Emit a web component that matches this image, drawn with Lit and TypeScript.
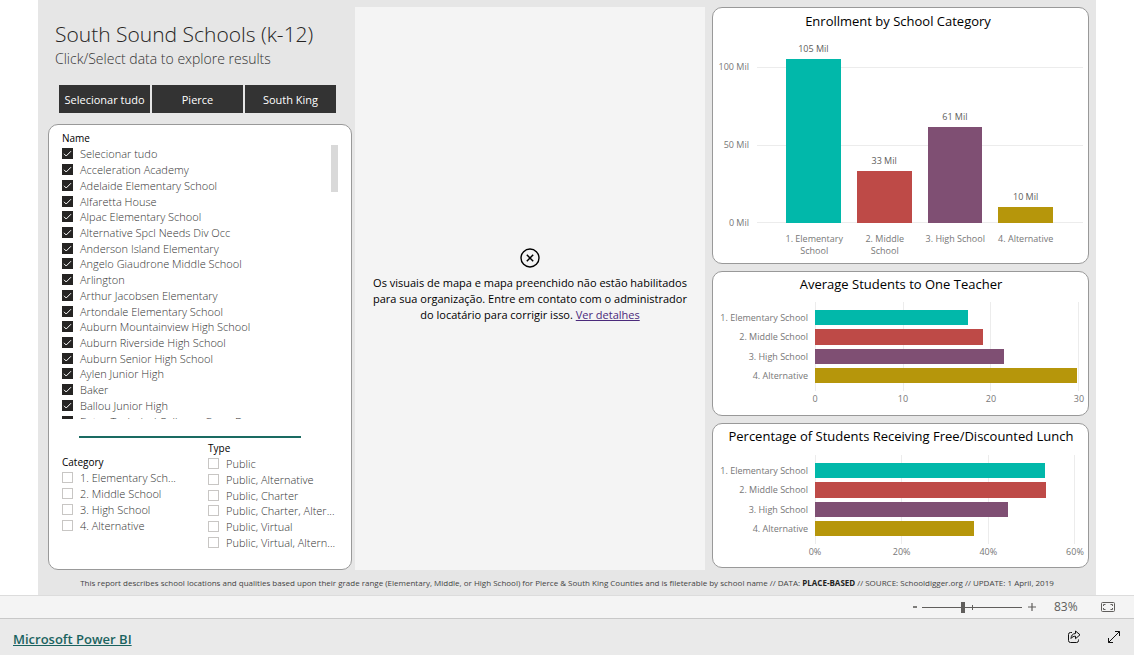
import { LitElement, html, css, svg } from "lit";
import { customElement } from "lit/decorators.js";
import { styleMap } from "lit/directives/style-map.js";

interface Bar {
  lines: string[];
  value: number;
  label?: string;
  color: string;
}

const TEAL = "#01b8aa";
const RED = "#be4a47";
const PURPLE = "#7f4f73";
const GOLD = "#b6960b";

const SCHOOLS = [
  "Selecionar tudo",
  "Acceleration Academy",
  "Adelaide Elementary School",
  "Alfaretta House",
  "Alpac Elementary School",
  "Alternative Spcl Needs Div Occ",
  "Anderson Island Elementary",
  "Angelo Giaudrone Middle School",
  "Arlington",
  "Arthur Jacobsen Elementary",
  "Artondale Elementary School",
  "Auburn Mountainview High School",
  "Auburn Riverside High School",
  "Auburn Senior High School",
  "Aylen Junior High",
  "Baker",
  "Ballou Junior High",
  "Bates Technical College - Open Doors",
];

const CATEGORIES = ["1. Elementary Sch...", "2. Middle School", "3. High School", "4. Alternative"];

const TYPES = [
  "Public",
  "Public, Alternative",
  "Public, Charter",
  "Public, Charter, Alter...",
  "Public, Virtual",
  "Public, Virtual, Altern...",
];

const ENROLLMENT: Bar[] = [
  { lines: ["1. Elementary", "School"], value: 105, label: "105 Mil", color: TEAL },
  { lines: ["2. Middle", "School"], value: 33.4, label: "33 Mil", color: RED },
  { lines: ["3. High School"], value: 61.6, label: "61 Mil", color: PURPLE },
  { lines: ["4. Alternative"], value: 10, label: "10 Mil", color: GOLD },
];

const RATIO: Bar[] = [
  { lines: ["1. Elementary School"], value: 17.4, color: TEAL },
  { lines: ["2. Middle School"], value: 19.1, color: RED },
  { lines: ["3. High School"], value: 21.5, color: PURPLE },
  { lines: ["4. Alternative"], value: 29.8, color: GOLD },
];

const LUNCH: Bar[] = [
  { lines: ["1. Elementary School"], value: 53, color: TEAL },
  { lines: ["2. Middle School"], value: 53.4, color: RED },
  { lines: ["3. High School"], value: 44.5, color: PURPLE },
  { lines: ["4. Alternative"], value: 36.8, color: GOLD },
];

@customElement("check-list")
export class CheckList extends LitElement {
  static properties = {
    items: { attribute: false },
    checked: { type: Boolean },
  };

  declare items: string[];
  declare checked: boolean;

  constructor() {
    super();
    this.items = [];
    this.checked = false;
  }

  static styles = css`
    :host {
      display: grid;
      grid-auto-rows: 1fr;
      min-width: 0;
    }
    .row {
      display: flex;
      align-items: center;
      gap: 7px;
      min-height: 0;
      font-size: 11px;
      font-weight: 300;
      line-height: 15px;
      color: #333;
      white-space: nowrap;
    }
    .box {
      appearance: none;
      flex: none;
      width: 11px;
      height: 11px;
      margin: 0;
      border: 1px solid #c8c6c4;
      background: #fff;
    }
    .box:checked {
      border-color: #252423;
      background: #252423
        url("data:image/svg+xml,%3Csvg xmlns='http://www.w3.org/2000/svg' viewBox='0 0 9 9'%3E%3Cpath d='M1 4.8 3.2 7 8 2.2' fill='none' stroke='white' stroke-width='1'/%3E%3C/svg%3E")
        center / 9px 9px no-repeat;
    }
  `;

  render() {
    return this.items.map(
      (item) => html`<label class="row"
        ><input class="box" type="checkbox" .checked=${this.checked} /><span>${item}</span></label
      >`
    );
  }
}

@customElement("column-chart")
export class ColumnChart extends LitElement {
  static properties = { bars: { attribute: false } };
  declare bars: Bar[];

  static styles = css`
    :host {
      display: grid;
      grid-template-columns: 36px 1fr;
      column-gap: 8px;
      font-size: 9px;
      line-height: 12px;
      color: #777;
    }
    .scale {
      display: flex;
      flex-direction: column;
      justify-content: space-between;
      text-align: right;
      white-space: nowrap;
      margin: -6px 0;
    }
    .plot {
      display: grid;
      height: 156px;
    }
    .lines,
    .bars {
      grid-area: 1 / 1;
    }
    .lines {
      display: flex;
      flex-direction: column;
      justify-content: space-between;
    }
    .line {
      height: 1px;
      background: #ececec;
    }
    .bars {
      display: flex;
      align-items: flex-end;
      gap: 16px;
      padding: 0 30px 0 29px;
      height: 156px;
    }
    .col {
      flex: 1;
      height: 100%;
      display: flex;
      flex-direction: column;
      justify-content: flex-end;
      align-items: stretch;
      text-align: center;
    }
    .value {
      flex: none;
      margin-bottom: 4px;
      color: #605e5c;
      white-space: nowrap;
    }
    .bar {
      flex: none;
    }
    .names {
      grid-column: 2;
      display: flex;
      padding: 10px 22px 0 22px;
    }
    .name {
      flex: 1;
      text-align: center;
      white-space: nowrap;
    }
  `;

  render() {
    return html`
      <div class="scale"><span>100 Mil</span><span>50 Mil</span><span>0 Mil</span></div>
      <div class="plot">
        <div class="lines"><i class="line"></i><i class="line"></i><i class="line"></i></div>
        <div class="bars">
          ${this.bars.map(
            (b) => html`<div class="col">
              <span class="value">${b.label}</span>
              <div class="bar" style=${styleMap({ height: `${b.value}%`, background: b.color })}></div>
            </div>`
          )}
        </div>
      </div>
      <div class="names">
        ${this.bars.map(
          (b) => html`<div class="name">${b.lines.map((l) => html`<div>${l}</div>`)}</div>`
        )}
      </div>
    `;
  }
}

@customElement("row-chart")
export class RowChart extends LitElement {
  static properties = {
    bars: { attribute: false },
    ticks: { attribute: false },
    max: { type: Number },
  };
  declare bars: Bar[];
  declare ticks: string[];
  declare max: number;

  static styles = css`
    :host {
      display: grid;
      grid-template-columns: 89px 1fr;
      column-gap: 7px;
      font-size: 9px;
      line-height: 15px;
      color: #777;
    }
    .names,
    .bars {
      display: grid;
      grid-auto-rows: 1fr;
      row-gap: 4px;
      height: 73px;
      padding: 8px 0;
    }
    .names {
      text-align: right;
      white-space: nowrap;
    }
    .plot {
      display: grid;
    }
    .lines,
    .bars {
      grid-area: 1 / 1;
    }
    .lines {
      display: flex;
      justify-content: space-between;
    }
    .line {
      width: 1px;
      background: #ececec;
    }
    .ticks {
      grid-column: 2;
      display: flex;
      justify-content: space-between;
      margin: 0 -15px;
    }
    .tick {
      width: 30px;
      text-align: center;
    }
  `;

  render() {
    return html`
      <div class="names">${this.bars.map((b) => html`<span>${b.lines[0]}</span>`)}</div>
      <div class="plot">
        <div class="lines">${this.ticks.map(() => html`<i class="line"></i>`)}</div>
        <div class="bars">
          ${this.bars.map(
            (b) =>
              html`<div
                style=${styleMap({ width: `${(b.value / this.max) * 100}%`, background: b.color })}
              ></div>`
          )}
        </div>
      </div>
      <div class="ticks">${this.ticks.map((t) => html`<span class="tick">${t}</span>`)}</div>
    `;
  }
}

const blockedIcon = svg`<circle cx="10" cy="10" r="9" fill="none" stroke="#000" stroke-width="1.4"/><path d="M6.8 6.8l6.4 6.4M13.2 6.8l-6.4 6.4" stroke="#000" stroke-width="1.5" fill="none"/>`;

@customElement("app-root")
export class AppRoot extends LitElement {
  static styles = css`
    :host {
      display: flex;
      flex-direction: column;
      min-height: 100vh;
      box-sizing: border-box;
      background: #fff;
      font-family: "Open Sans", "Noto Sans", sans-serif;
      font-size: 11px;
      color: #000;
    }
    .report {
      flex: 1;
      display: flex;
      flex-direction: column;
      margin: 0 38px;
      background: #e6e6e6;
    }
    .columns {
      display: grid;
      grid-template-columns: minmax(0, 304fr) minmax(0, 350fr) minmax(0, 381fr);
      column-gap: 3px;
      padding: 7px 7px 0 10px;
    }
    .left {
      display: flex;
      flex-direction: column;
      min-width: 0;
    }
    .title {
      margin: 11px 0 0 7px;
      font-size: 21px;
      line-height: 32px;
      font-weight: 300;
      color: #252423;
      white-space: nowrap;
    }
    .subtitle {
      margin: 0 0 0 7px;
      font-size: 14px;
      line-height: 17px;
      font-weight: 300;
      color: #333;
      white-space: nowrap;
    }
    .regions {
      display: grid;
      grid-template-columns: repeat(3, 1fr);
      gap: 2px;
      margin: 18px 16px 11px 11px;
    }
    .region {
      height: 28px;
      padding: 0;
      border: 0;
      background: #333;
      color: #fff;
      font: inherit;
      font-size: 11px;
      white-space: nowrap;
    }
    .filters {
      box-sizing: border-box;
      height: 446px;
      padding: 6px 13px 0;
      border: 1px solid #999;
      border-radius: 10px;
      background: #fff;
    }
    .heading {
      margin: 0;
      font-size: 10px;
      line-height: 14px;
      font-weight: 400;
    }
    .names {
      display: flex;
      justify-content: space-between;
      height: 274px;
      overflow: hidden;
    }
    .schools {
      height: 283px;
      padding-top: 1px;
    }
    .thumb {
      width: 7px;
      height: 47px;
      background: #d9d9d9;
    }
    .rule {
      height: 2px;
      margin: 17px 37px 3px 17px;
      border: 0;
      background: #1a6b62;
    }
    .pair {
      display: grid;
      grid-template-columns: minmax(0, 146fr) minmax(0, 130fr);
    }
    .category {
      padding-top: 14px;
    }
    .categories {
      height: 63px;
      padding-top: 1px;
    }
    .types {
      height: 94px;
      padding-top: 1px;
    }
    .map {
      display: flex;
      flex-direction: column;
      align-items: center;
      justify-content: center;
      min-height: 562px;
      box-sizing: border-box;
      padding: 0 16px 6px;
      background: #f4f4f4;
      text-align: center;
    }
    .message {
      margin: 7px 0 0;
      font-size: 11px;
      line-height: 16px;
    }
    .details {
      color: #4b2a7b;
    }
    .right {
      display: flex;
      flex-direction: column;
      gap: 7px;
      margin-left: 4px;
      min-width: 0;
    }
    .card {
      box-sizing: border-box;
      height: 145px;
      padding: 3px 5px 0 6px;
      border: 1px solid #999;
      border-radius: 10px;
      background: #fff;
    }
    .card.tall {
      height: 257px;
      padding: 4px 5px 0 0;
    }
    .card-title {
      margin: 0;
      font-size: 13px;
      line-height: 18px;
      font-weight: 400;
      text-align: center;
      white-space: nowrap;
    }
    .enrollment {
      margin-top: 37px;
    }
    .ratio {
      margin: 9px 4px 0 0;
    }
    .lunch {
      margin: 10px 8px 0 0;
    }
    .note {
      margin: 5px 0 0;
      font-size: 8px;
      line-height: 16px;
      text-align: center;
      color: #444;
      white-space: nowrap;
    }
    .note b {
      color: #222;
    }
    .zoombar {
      display: flex;
      align-items: center;
      justify-content: flex-end;
      height: 22px;
      padding-right: 19px;
      border-top: 1px solid #dcdcdc;
      background: #f4f4f4;
      color: #605e5c;
    }
    .icon {
      display: flex;
      align-items: center;
      justify-content: center;
      padding: 0;
      border: 0;
      background: none;
      color: inherit;
    }
    .slider {
      appearance: none;
      width: 100px;
      height: 11px;
      margin: 0 6px 0 4px;
      background: linear-gradient(#605e5c, #605e5c) center / 100% 1px no-repeat,
        linear-gradient(#605e5c, #605e5c) center / 1px 5px no-repeat;
    }
    .slider::-webkit-slider-thumb {
      appearance: none;
      width: 4px;
      height: 11px;
      background: #605e5c;
    }
    .percent {
      width: 47px;
      margin-left: 18px;
      font-size: 12px;
      line-height: 16px;
    }
    .footer {
      display: flex;
      align-items: center;
      gap: 24px;
      height: 36px;
      padding: 0 12px 0 13px;
      border-top: 1px solid #c8c8c8;
      background: #eaeaea;
    }
    .brand {
      margin: 4px auto 0 0;
      font-size: 13px;
      line-height: 20px;
      font-weight: 600;
      color: #1a6360;
    }
  `;

  render() {
    return html`
      <main class="report">
        <div class="columns">
          <section class="left">
            <h1 class="title">South Sound Schools (k-12)</h1>
            <p class="subtitle">Click/Select data to explore results</p>
            <div class="regions">
              <button class="region">Selecionar tudo</button>
              <button class="region">Pierce</button>
              <button class="region">South King</button>
            </div>
            <div class="filters">
              <h2 class="heading">Name</h2>
              <div class="names">
                <check-list class="schools" .items=${SCHOOLS} checked></check-list>
                <div class="thumb"></div>
              </div>
              <hr class="rule" />
              <div class="pair">
                <div class="category">
                  <h2 class="heading">Category</h2>
                  <check-list class="categories" .items=${CATEGORIES}></check-list>
                </div>
                <div>
                  <h2 class="heading">Type</h2>
                  <check-list class="types" .items=${TYPES}></check-list>
                </div>
              </div>
            </div>
          </section>

          <section class="map">
            <svg width="20" height="20" viewBox="0 0 20 20">${blockedIcon}</svg>
            <p class="message">
              Os visuais de mapa e mapa preenchido não estão habilitados para sua organização. Entre em
              contato com o administrador do locatário para corrigir isso.
              <a class="details" href="#">Ver detalhes</a>
            </p>
          </section>

          <section class="right">
            <article class="card tall">
              <h2 class="card-title">Enrollment by School Category</h2>
              <column-chart class="enrollment" .bars=${ENROLLMENT}></column-chart>
            </article>
            <article class="card">
              <h2 class="card-title">Average Students to One Teacher</h2>
              <row-chart class="ratio" .bars=${RATIO} .ticks=${["0", "10", "20", "30"]} max="30"></row-chart>
            </article>
            <article class="card">
              <h2 class="card-title">Percentage of Students Receiving Free/Discounted Lunch</h2>
              <row-chart
                class="lunch"
                .bars=${LUNCH}
                .ticks=${["0%", "20%", "40%", "60%"]}
                max="60"
              ></row-chart>
            </article>
          </section>
        </div>
        <p class="note">
          This report describes school locations and qualities based upon their grade range (Elementary,
          Middle, or High School) for Pierce &amp; South King Counties and is fileterable by school name //
          DATA: <b>PLACE-BASED</b> // SOURCE: Schooldigger.org // UPDATE: 1 April, 2019
        </p>
      </main>

      <div class="zoombar">
        <button class="icon" aria-label="Reduzir">
          <svg width="6" height="10" viewBox="0 0 6 10"><path d="M1 5h4" stroke="currentColor" stroke-width="1.6" /></svg>
        </button>
        <input class="slider" type="range" min="0" max="100" value="41" aria-label="Zoom" />
        <button class="icon" aria-label="Ampliar">
          <svg width="8" height="10" viewBox="0 0 8 10"><path d="M0 5h8M4 1v8" stroke="currentColor" stroke-width="1.2" /></svg>
        </button>
        <span class="percent">83%</span>
        <button class="icon" aria-label="Ajustar à página">
          <svg width="14" height="10" viewBox="0 0 14 10" fill="none" stroke="currentColor">
            <rect x="0.5" y="0.5" width="13" height="9" rx="1" />
            <path d="M2.5 4V2.5H4.5M9.5 2.5H11.5V4M11.5 6V7.5H9.5M4.5 7.5H2.5V6" />
          </svg>
        </button>
      </div>

      <footer class="footer">
        <a class="brand" href="#">Microsoft Power BI</a>
        <button class="icon" aria-label="Compartilhar">
          <svg width="16" height="16" viewBox="0 0 16 16" fill="none" stroke="#111" stroke-linejoin="round">
            <path d="M6 3.5H4.5a2 2 0 0 0-2 2v6a2 2 0 0 0 2 2h6a2 2 0 0 0 2-2V10.5" />
            <path d="M9.5 2v2.5C6.5 4.7 5.2 6.5 5 9.5c1.2-1.6 2.5-2.300 4.500-2.300V9.700L14 5.800z" />
          </svg>
        </button>
        <button class="icon" aria-label="Tela inteira">
          <svg width="16" height="16" viewBox="0 0 16 16" fill="none" stroke="#111" stroke-width="1">
            <path d="M2.5 13.5L13.5 2.5M9 2.5H13.5V7M2.5 9V13.5H7" />
          </svg>
        </button>
      </footer>
    `;
  }
}
